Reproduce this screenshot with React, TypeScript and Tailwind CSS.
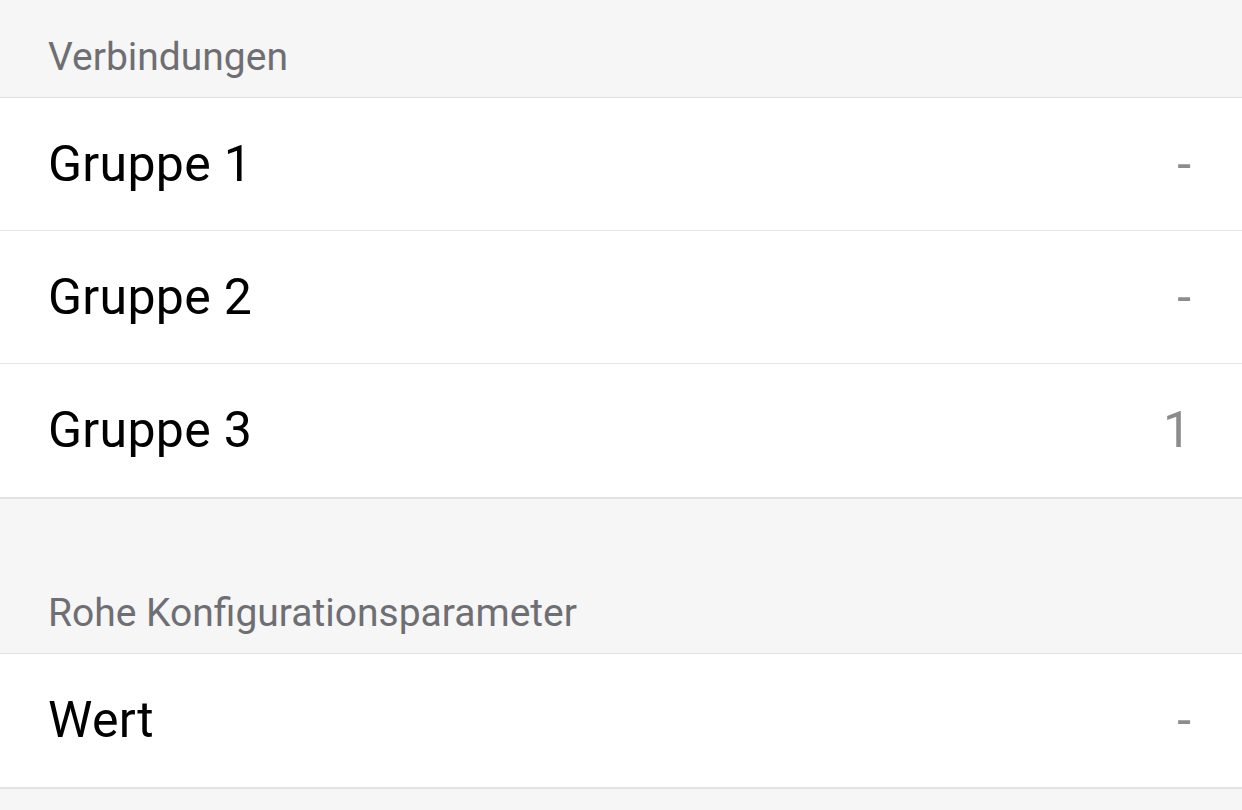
import React from 'react';

interface Row {
  label: string;
  value: string;
}

const sections: { title: string; rows: Row[]; gapTop: boolean }[] = [
  {
    title: 'Verbindungen',
    gapTop: false,
    rows: [
      { label: 'Gruppe 1', value: '-' },
      { label: 'Gruppe 2', value: '-' },
      { label: 'Gruppe 3', value: '1' },
    ],
  },
  {
    title: 'Rohe Konfigurationsparameter',
    gapTop: true,
    rows: [{ label: 'Wert', value: '-' }],
  },
];

export default function App() {
  return (
    <div
      className="min-h-[810px] w-full bg-[#f6f6f6]"
      style={{ fontFamily: 'Roboto, "Noto Sans", sans-serif' }}
    >
      {sections.map((s) => (
        <section key={s.title} className={s.gapTop ? 'pt-[57px]' : ''}>
          {/* Section header */}
          <div className="h-[98px] flex items-end pb-[20px] px-[48px] border-b border-[#e2e2e2]">
            <span className="text-[39px] leading-none text-[#6e6e73]">{s.title}</span>
          </div>

          {/* Rows */}
          <div className="bg-white border-b-2 border-[#e2e2e2]">
            {s.rows.map((r, i) => (
              <div
                key={r.label}
                className={
                  'h-[133px] flex items-center justify-between pl-[48px] pr-[51px] ' +
                  (i < s.rows.length - 1 ? 'border-b border-[#e6e6e6]' : '')
                }
              >
                <span className="text-[50px] tracking-[0.3px] text-black">{r.label}</span>
                <span className="text-[50px] text-[#8c8c8c]">{r.value}</span>
              </div>
            ))}
          </div>
        </section>
      ))}
    </div>
  );
}
